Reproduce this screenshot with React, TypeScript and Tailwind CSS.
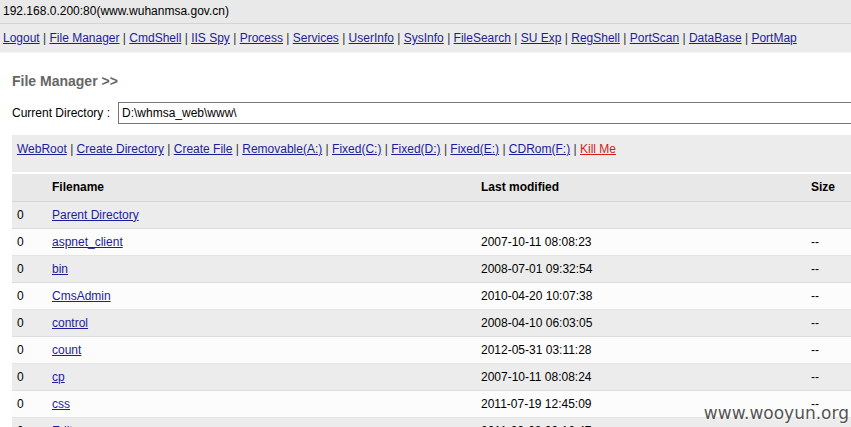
import React from 'react';

const navLinks = [
  'Logout', 'File Manager', 'CmdShell', 'IIS Spy', 'Process', 'Services', 'UserInfo',
  'SysInfo', 'FileSearch', 'SU Exp', 'RegShell', 'PortScan', 'DataBase', 'PortMap',
];

const dirLinks = [
  'WebRoot', 'Create Directory', 'Create File', 'Removable(A:)', 'Fixed(C:)',
  'Fixed(D:)', 'Fixed(E:)', 'CDRom(F:)',
];

const rows = [
  { name: 'Parent Directory', date: '', size: '' },
  { name: 'aspnet_client', date: '2007-10-11 08:08:23', size: '--' },
  { name: 'bin', date: '2008-07-01 09:32:54', size: '--' },
  { name: 'CmsAdmin', date: '2010-04-20 10:07:38', size: '--' },
  { name: 'control', date: '2008-04-10 06:03:05', size: '--' },
  { name: 'count', date: '2012-05-31 03:11:28', size: '--' },
  { name: 'cp', date: '2007-10-11 08:08:24', size: '--' },
  { name: 'css', date: '2011-07-19 12:45:09', size: '--' },
  { name: 'Editor', date: '2011-03-08 09:16:47', size: '--' },
];

function Sep() {
  return <span className="text-[#333]">{' | '}</span>;
}

export default function App() {
  return (
    <div className="relative h-[427px] w-[851px] overflow-hidden bg-white text-[12px] text-black [font-family:'Liberation_Sans',Arial,sans-serif]">
      <div className="h-[24px] border-b border-[#d4d4d4] bg-[#e9e9e9] pl-[3px] leading-[23px]">
        192.168.0.200:80(www.wuhanmsa.gov.cn)
      </div>
      <div className="h-[29px] border-b border-[#f4f4f4] bg-[#ebebeb] pl-[3px] leading-[28px] whitespace-pre">
        {navLinks.map((l, i) => (
          <span key={l}>
            {i > 0 && <Sep />}
            <a className="text-[#1d1d99] underline">{l}</a>
          </span>
        ))}
      </div>

      <div className="pl-[12px]">
        <div className="pt-[18px] text-[14px] font-bold text-[#666]">File Manager &gt;&gt;</div>
        <div className="mt-[10px] flex items-center">
          <span className="w-[106px]">Current Directory :</span>
          <div className="flex h-[22px] flex-1 items-center border border-[#777] pl-[3px] -mr-[2px]">
            D:\whmsa_web\www\
          </div>
        </div>
        <div className="mt-[11px] h-[37px] bg-[#ececec] pl-[5px] pt-[5px] whitespace-pre">
          {dirLinks.map((l, i) => (
            <span key={l}>
              {i > 0 && <Sep />}
              <a className="text-[#1d1d99] underline">{l}</a>
            </span>
          ))}
          <Sep />
          <a className="text-[#d21c1c] underline">Kill Me</a>
        </div>

        <table className="mt-[2px] w-full border-collapse">
          <thead>
            <tr className="h-[27px] border-b border-[#d6d6d6] bg-[#e8e8e8]">
              <th className="w-[35px]" />
              <th className="w-[429px] pl-[5px] text-left font-bold">Filename</th>
              <th className="w-[330px] pl-[5px] text-left font-bold">Last modified</th>
              <th className="pl-[5px] text-left font-bold">Size</th>
            </tr>
          </thead>
          <tbody>
            {rows.map((r, i) => (
              <tr
                key={r.name}
                className={
                  i % 2 === 0
                    ? 'h-[27px] border-b border-[#dcdcdc] bg-[#ececec]'
                    : 'h-[27px] border-b border-[#e4e4e4] bg-[#fcfcfc]'
                }
              >
                <td className="pl-[5px]">0</td>
                <td className="pl-[5px]">
                  <a className="text-[#1d1d99] underline">{r.name}</a>
                </td>
                <td className="pl-[5px]">{r.date}</td>
                <td className="pl-[5px]">{r.size}</td>
              </tr>
            ))}
          </tbody>
        </table>
      </div>

      <div className="absolute right-[2px] bottom-[1px] text-[17px] text-[#555] [text-shadow:0_0_2px_#fff,0_0_2px_#fff] [font-family:'DejaVu_Sans',sans-serif]">
        www.wooyun.org
      </div>
    </div>
  );
}
